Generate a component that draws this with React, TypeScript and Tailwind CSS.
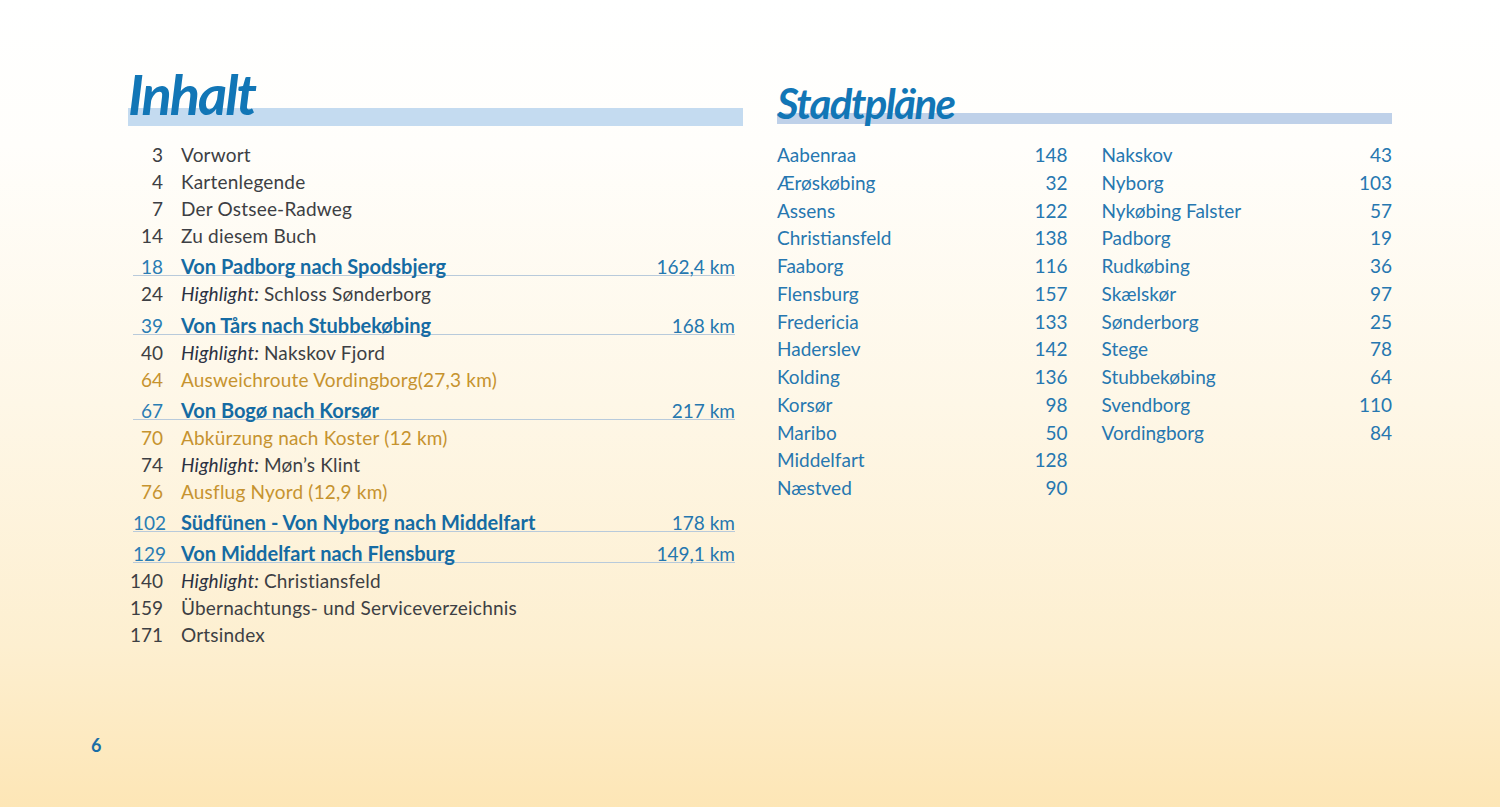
import React from "react"

type Row = { n: string; t: string; km?: string; kind?: "route" | "highlight" | "alt" }

const toc: Row[] = [
  { n: "3", t: "Vorwort" },
  { n: "4", t: "Kartenlegende" },
  { n: "7", t: "Der Ostsee-Radweg" },
  { n: "14", t: "Zu diesem Buch" },
  { n: "18", t: "Von Padborg nach Spodsbjerg", km: "162,4 km", kind: "route" },
  { n: "24", t: "Schloss Sønderborg", kind: "highlight" },
  { n: "39", t: "Von Tårs nach Stubbekøbing", km: "168 km", kind: "route" },
  { n: "40", t: "Nakskov Fjord", kind: "highlight" },
  { n: "64", t: "Ausweichroute Vordingborg(27,3 km)", kind: "alt" },
  { n: "67", t: "Von Bogø nach Korsør", km: "217 km", kind: "route" },
  { n: "70", t: "Abkürzung nach Koster (12 km)", kind: "alt" },
  { n: "74", t: "Møn’s Klint", kind: "highlight" },
  { n: "76", t: "Ausflug Nyord (12,9 km)", kind: "alt" },
  { n: "102", t: "Südfünen - Von Nyborg nach Middelfart", km: "178 km", kind: "route" },
  { n: "129", t: "Von Middelfart nach Flensburg", km: "149,1 km", kind: "route" },
  { n: "140", t: "Christiansfeld", kind: "highlight" },
  { n: "159", t: "Übernachtungs- und Serviceverzeichnis" },
  { n: "171", t: "Ortsindex" },
]

const plansA: [string, string][] = [
  ["Aabenraa", "148"],
  ["Ærøskøbing", "32"],
  ["Assens", "122"],
  ["Christiansfeld", "138"],
  ["Faaborg", "116"],
  ["Flensburg", "157"],
  ["Fredericia", "133"],
  ["Haderslev", "142"],
  ["Kolding", "136"],
  ["Korsør", "98"],
  ["Maribo", "50"],
  ["Middelfart", "128"],
  ["Næstved", "90"],
]

const plansB: [string, string][] = [
  ["Nakskov", "43"],
  ["Nyborg", "103"],
  ["Nykøbing Falster", "57"],
  ["Padborg", "19"],
  ["Rudkøbing", "36"],
  ["Skælskør", "97"],
  ["Sønderborg", "25"],
  ["Stege", "78"],
  ["Stubbekøbing", "64"],
  ["Svendborg", "110"],
  ["Vordingborg", "84"],
]

function TocRow({ row }: { row: Row }) {
  if (row.kind === "route") {
    return (
      <div className="mt-[4.3px] mb-[4px] ml-[5px] mr-[8px] flex h-[23px] items-start border-b border-[#b8cadb] leading-[27px]">
        <span className="w-[30px] shrink-0 text-right text-[#2a7db4]">{row.n}</span>
        <span className="ml-[18px] text-[20px] font-bold text-[#156ba3]">{row.t}</span>
        <span className="ml-auto text-[#2577af]">{row.km}</span>
      </div>
    )
  }
  const color = row.kind === "alt" ? "text-[#c6932f]" : "text-[#3d3f44]"
  return (
    <div className={`flex h-[27px] leading-[27px] ${color}`}>
      <span className="w-[35px] shrink-0 text-right">{row.n}</span>
      <span className="ml-[18px] tracking-[0.2px]">
        {row.kind === "highlight" && <em className="text-[#2b3142]">Highlight: </em>}
        {row.t}
      </span>
    </div>
  )
}

function PlanList({ items }: { items: [string, string][] }) {
  return (
    <div className="flex flex-col">
      {items.map(([name, page]) => (
        <div key={name} className="flex h-[27.75px] justify-between leading-[27.75px]">
          <span>{name}</span>
          <span>{page}</span>
        </div>
      ))}
    </div>
  )
}

export default function App() {
  return (
    <div className="flex h-[807px] w-full flex-col bg-[linear-gradient(180deg,#ffffff_0%,#fffefb_18%,#fef7e7_50%,#fdefd0_80%,#fde6b6_100%)] font-['Lato','Liberation_Sans',sans-serif] text-[19px]">
      <div className="flex gap-[34px] pl-[128px] pt-[60px]">
        <section className="w-[615px]">
          <div className="relative h-[66px] pt-[6px]">
            <div className="absolute bottom-0 left-0 right-0 h-[18px] bg-[#c4dbf0]" />
            <h1 className="relative text-[56px] font-bold italic leading-[56px] tracking-[-2px] text-[#1276b6]">Inhalt</h1>
          </div>
          <div className="mt-[15px] flex flex-col">
            {toc.map((row) => (
              <TocRow key={row.n} row={row} />
            ))}
          </div>
        </section>

        <section className="w-[615px]">
          <div className="relative h-[66px] pt-[22px]">
            <div className="absolute bottom-[2px] left-0 right-0 h-[11px] bg-[#bfd1e9]" />
            <h2 className="relative text-[42px] font-bold italic leading-[42px] tracking-[-1.6px] text-[#1276b6]">Stadtpläne</h2>
          </div>
          <div className="mt-[15px] grid grid-cols-2 gap-x-[34px] text-[#2677b0]">
            <PlanList items={plansA} />
            <PlanList items={plansB} />
          </div>
        </section>
      </div>

      <div className="mt-auto pb-[48px] pl-[91px]">
        <span className="text-[18px] font-bold leading-[20px] text-[#1a6ea6]">6</span>
      </div>
    </div>
  )
}
